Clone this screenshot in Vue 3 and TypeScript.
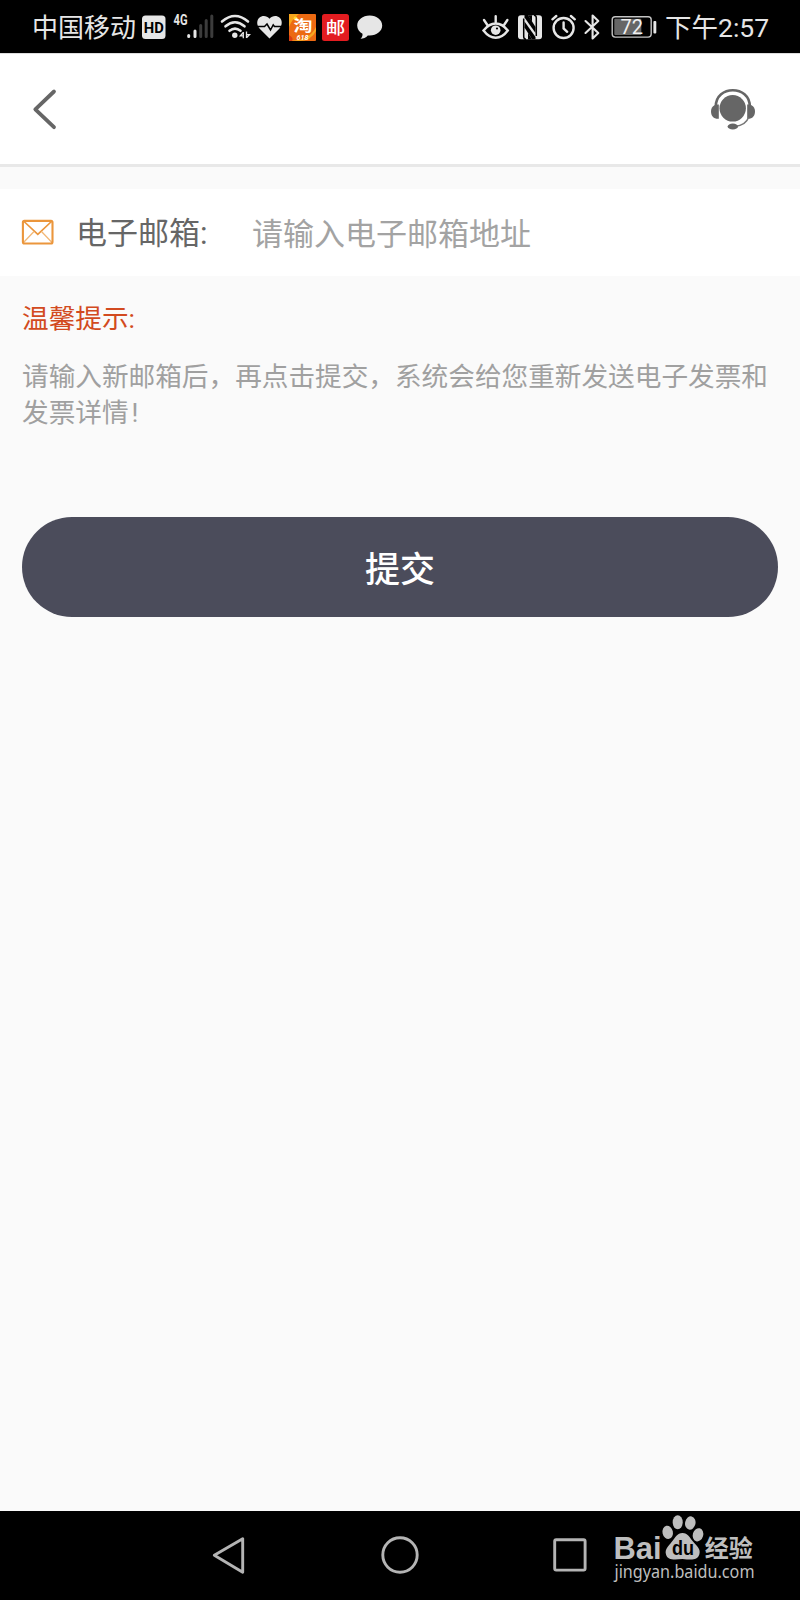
<script setup lang="ts">
import { ref } from 'vue'

const email = ref<string>('')
const carrier = '中国移动'
const time = '下午2:57'
const battery = 72
</script>

<template>
  <div class="phone">
    <div class="status">
      <div class="status-left">
        <span class="carrier">{{ carrier }}</span>
        <svg class="hd" width="24" height="24" viewBox="142 15 24 24">
          <rect x="142" y="15.5" width="23.5" height="23.5" rx="3.5" fill="#e6e6e6" />
          <text x="153.8" y="32.5" text-anchor="middle" textLength="20" lengthAdjust="spacingAndGlyphs" class="hd-text">HD</text>
        </svg>
        <svg class="signal" width="42" height="36" viewBox="173 9 42 36">
          <text x="173.6" y="25.2" textLength="14" lengthAdjust="spacingAndGlyphs" class="net-text">4G</text>
          <g stroke-width="3" stroke-linecap="round">
            <path d="M188.700 35.500V36.500M195 31V36.500" stroke="#e6e6e6" />
            <path d="M200.700 25.500V36.500M206.200 20.500V36.500M211.800 16V36.500" stroke="#3c3c3c" />
          </g>
        </svg>
        <svg class="wifi" width="32" height="26" viewBox="220 14 32 26">
          <g fill="none" stroke="#e6e6e6" stroke-width="2.6" stroke-linecap="round">
            <path d="M222 21.5Q235 10.5 248 21.5" />
            <path d="M225.500 26.300Q235 18.200 244.500 26.300" />
            <path d="M229.500 30.800Q235 26.400 240.500 30.800" />
          </g>
          <circle cx="234.800" cy="35.300" r="2.700" fill="#e6e6e6" />
          <path d="M243.300 32V38.200M243.300 32.300L240.300 35.800H243.300M246.500 31.500V38M246.500 37.800L249.500 34.600H246.500" fill="none" stroke="#e6e6e6" stroke-width="1.300" />
        </svg>
        <svg class="heart" width="26" height="24" viewBox="257 15 26 24">
          <path d="M269.500 38.500L259.500 28.500C256.500 25 256.500 20.500 259.300 17.800C262.300 15 266.800 15.500 269.500 18.800C272.200 15.500 276.700 15 279.700 17.800C282.500 20.500 282.500 25 279.500 28.500Z" fill="#e6e6e6" />
          <path d="M256 26.500H264.500L267 24L270.500 30L273.200 24.800L274.500 26.500H283" fill="none" stroke="#000" stroke-width="1.500" />
        </svg>
        <svg class="tao" width="27" height="27" viewBox="0 0 27 27">
          <rect width="27" height="27" rx="1" fill="#ec6a12" />
          <path d="M0 0H10Q3 5 0 13Z" fill="#f6a51c" />
          <path d="M1 27Q21 26 27 13V17Q22 27 10 27Z" fill="#f8a820" />
          <path d="M0 21Q5 24 3 27H0Z" fill="#d93e13" />
          <circle cx="6.500" cy="4.500" r="2" fill="#ffd52c" />
          <text x="14" y="16.500" text-anchor="middle" textLength="19" lengthAdjust="spacingAndGlyphs" class="tao-text">淘</text>
          <text x="13.500" y="25.600" text-anchor="middle" textLength="12" lengthAdjust="spacingAndGlyphs" class="tao-num">618</text>
        </svg>
        <svg class="you" width="27" height="27" viewBox="0 0 27 27">
          <rect width="27" height="27" rx="2.500" fill="#e31c20" />
          <text x="13.500" y="19.800" text-anchor="middle" textLength="19.500" lengthAdjust="spacingAndGlyphs" class="you-text">邮</text>
        </svg>
        <svg class="bubble" width="26" height="25" viewBox="357 15 26 25">
          <path d="M369.700 15.500C376.800 15.500 382.200 20 382.200 25.500C382.200 31 376.800 35.500 369.700 35.500L367.800 35.400C366 37.600 363.300 38.600 360.500 38.700C362.100 37.300 362.700 35.800 362.500 33.700C359.200 31.900 357.200 29 357.200 25.500C357.200 20 362.600 15.500 369.700 15.500Z" fill="#e6e6e6" />
        </svg>
      </div>
      <div class="status-right">
        <svg width="28" height="26" viewBox="482 14 28 26">
          <g fill="none" stroke="#e6e6e6" stroke-width="2.400" stroke-linecap="round">
            <path d="M483.500 30.500Q489 23.500 495.700 23.500Q502.400 23.500 507.800 30.500Q502.400 37.700 495.700 37.700Q489 37.700 483.500 30.500Z" />
            <path d="M495.700 16.200V22M484 20L487.200 24.700M507.400 20L504.200 24.700" />
          </g>
          <circle cx="495.700" cy="30.200" r="4.800" fill="#e6e6e6" />
          <circle cx="497" cy="28.500" r="1.100" fill="#000" />
        </svg>
        <svg class="nfc" width="24" height="25" viewBox="518 15 24 25">
          <rect x="518" y="15.200" width="24" height="24" rx="3" fill="#e6e6e6" />
          <path d="M523.700 18.500V36.500C523.700 38 524.500 39.200 526 39.200" fill="none" stroke="#000" stroke-width="1.500" />
          <path d="M536.300 36V18C536.300 16.500 535.500 15.200 534 15.200" fill="none" stroke="#000" stroke-width="1.500" />
          <path d="M524.500 15L528 15L535.500 27V33L524.500 17.500Z" fill="#000" />
          <path d="M535.500 39.300H532L524.500 27.500V21.500L535.500 37Z" fill="#000" />
          <path d="M528 24V39.300H532L528 33Z" fill="#000" />
          <path d="M532 30.500V15.200H528L532 22Z" fill="#000" />
        </svg>
        <svg class="alarm" width="26" height="26" viewBox="551 14 26 26">
          <g fill="none" stroke="#e6e6e6" stroke-width="2.400" stroke-linecap="round">
            <circle cx="563.600" cy="28" r="10" />
            <path d="M563.600 22.500V28.500L567.200 31.800M552.400 19.300L556.300 16M574.800 19.300L570.900 16" />
          </g>
        </svg>
        <svg class="bluetooth" width="17" height="28" viewBox="584 13 17 28">
          <path d="M585.500 21L598.300 33L592.600 38.500V15.500L598.300 21L585.500 33" fill="none" stroke="#e6e6e6" stroke-width="2.100" stroke-linejoin="round" stroke-linecap="round" />
        </svg>
        <svg class="battery" width="46" height="24" viewBox="611 15 46 24">
          <rect x="612.200" y="16.700" width="39" height="20.400" rx="3" fill="none" stroke="#c4c4c4" stroke-width="1.400" />
          <rect x="614.300" y="18.800" width="27" height="16.200" rx="1" fill="#666" />
          <rect x="653.400" y="21" width="2.900" height="12.500" rx="1" fill="#e6e6e6" />
          <text x="631.700" y="33.800" text-anchor="middle" class="battery-text">{{ battery }}</text>
        </svg>
        <span class="time">{{ time }}</span>
      </div>
    </div>

    <header class="header">
      <svg width="24" height="42" viewBox="33 88 24 42">
        <path d="M54 91.500L35.300 109.300L54 127.200" fill="none" stroke="#666" stroke-width="3.800" stroke-linecap="round" stroke-linejoin="round" />
      </svg>
      <svg width="46" height="42" viewBox="710 87.500 46 42">
        <circle cx="732.700" cy="107.800" r="13.200" fill="#666" />
        <path d="M715.800 106C715.800 84.300 749.800 84.300 749.800 106" fill="none" stroke="#666" stroke-width="2.600" />
        <path d="M718.800 104C714 103.500 711 106.500 711 111C711 115.500 714 118.800 718.800 118.300Z" fill="#666" />
        <path d="M747.200 104C752 103.500 755 106.500 755 111C755 115.500 752 118.800 747.200 118.300Z" fill="#666" />
        <path d="M748.500 117Q746 124.500 735 126" fill="none" stroke="#777" stroke-width="1.500" />
        <ellipse cx="732.800" cy="126" rx="5.200" ry="3" fill="#666" />
      </svg>
    </header>

    <label class="field">
      <svg class="mail" width="32" height="26" viewBox="22 219 32 26">
        <g fill="none" stroke="#eb963c">
          <path d="M23.500 221L37.800 234.300L52 221" stroke-width="1.700" />
          <path d="M23.500 242.500L34 231.500M52 242.500L41.500 231.500" stroke="#f2b878" stroke-width="1.300" />
          <rect x="22.900" y="220.900" width="29.600" height="22.600" rx="1.500" stroke-width="2.100" />
        </g>
      </svg>
      <span class="label">电子邮箱:</span>
      <input v-model="email" class="input" type="text" placeholder="请输入电子邮箱地址" />
    </label>

    <section class="tips">
      <h2 class="tips-title">温馨提示:</h2>
      <p class="tips-body">请输入新邮箱后，再点击提交，系统会给您重新发送电子发票和<br />发票详情<span class="bang">!</span></p>
    </section>

    <button class="submit" type="button">提交</button>

    <nav class="nav">
      <svg class="nav-back" width="34" height="40" viewBox="211 1535 34 40">
        <path d="M214.300 1555.300L242.700 1538.800V1572.200Z" fill="none" stroke="#b4b4b4" stroke-width="2.900" stroke-linejoin="round" />
      </svg>
      <svg class="nav-home" width="38" height="38" viewBox="0 0 38 38">
        <circle cx="19" cy="19" r="17.200" fill="none" stroke="#b4b4b4" stroke-width="2.900" />
      </svg>
      <svg class="nav-recent" width="34" height="34" viewBox="0 0 34 34">
        <rect x="1.700" y="1.700" width="30.400" height="30.400" rx="1.500" fill="none" stroke="#b4b4b4" stroke-width="2.900" />
      </svg>
      <svg class="watermark" width="150" height="80" viewBox="610 1510 150 80">
        <g fill="#bebebe">
          <text x="613.500" y="1558.500" textLength="48" lengthAdjust="spacingAndGlyphs" class="wm-bai">Bai</text>
          <ellipse cx="667.700" cy="1532.300" rx="5.200" ry="6.700" transform="rotate(-12 667.700 1532.300)" />
          <ellipse cx="677.700" cy="1522.200" rx="5" ry="7" />
          <ellipse cx="690.300" cy="1523" rx="5.200" ry="6.700" transform="rotate(12 690.300 1523)" />
          <ellipse cx="698" cy="1534.800" rx="5.200" ry="6.700" transform="rotate(16 698 1534.800)" />
          <path d="M682.500 1533C688 1533 689.500 1537.500 693 1541.500C697 1546 701 1549 699.300 1554.500C697.500 1560.500 691.500 1560 682.500 1559C673.500 1560 667.500 1560 666 1554.500C664.500 1549 668.500 1546 672 1541.500C675.500 1537.500 677 1533 682.500 1533Z" />
          <text x="704.700" y="1556.700" textLength="48" lengthAdjust="spacingAndGlyphs" class="wm-cn">经验</text>
          <text x="614.500" y="1577.500" textLength="140" lengthAdjust="spacingAndGlyphs" class="wm-url">jingyan.baidu.com</text>
        </g>
        <text x="683" y="1555" text-anchor="middle" textLength="22" lengthAdjust="spacingAndGlyphs" class="wm-du">du</text>
      </svg>
    </nav>
  </div>
</template>

<style>
body {
  margin: 0;
}
</style>

<style scoped>
.phone {
  display: flex;
  flex-direction: column;
  width: 800px;
  height: 1600px;
  overflow: hidden;
  background: #fafafa;
  font-family: Roboto, 'Noto Sans CJK SC', sans-serif;
}
svg {
  display: block;
  flex: none;
  overflow: visible;
}
.status {
  display: flex;
  justify-content: space-between;
  flex: none;
  height: 53px;
  padding: 0 31px 0 32px;
  box-sizing: border-box;
  background: #000;
  color: #e6e6e6;
}
.status-left,
.status-right {
  display: flex;
  align-items: center;
  height: 54px;
}
.carrier {
  width: 104px;
  padding-top: 2px;
  font-size: 26px;
  line-height: 54px;
  white-space: nowrap;
}
.hd { margin-left: 6px; }
.signal { margin-left: 7px; }
.wifi { margin-left: 5px; }
.heart { margin-left: 5px; }
.tao { margin-left: 6px; }
.you { margin-left: 6px; }
.bubble { margin-left: 8px; }
.nfc { margin-left: 8px; }
.alarm { margin-left: 9px; }
.bluetooth { margin-left: 7px; }
.battery { margin-left: 10px; }
.time {
  margin-left: 8px;
  width: 104px;
  padding-top: 1px;
  font-size: 26.500px;
  line-height: 54px;
  white-space: nowrap;
}
.hd-text {
  font: 700 14.500px Roboto, sans-serif;
  fill: #000;
}
.net-text {
  font: 700 15px Roboto, sans-serif;
  fill: #e6e6e6;
}
.tao-text {
  font: 700 15px 'Noto Sans CJK SC', sans-serif;
  fill: #fff;
}
.tao-num {
  font: italic 700 7.500px Roboto, sans-serif;
  fill: #fff;
}
.you-text {
  font: 500 16.500px 'Noto Sans CJK SC', sans-serif;
  fill: #fff;
}
.battery-text {
  font: 400 20px Roboto, sans-serif;
  fill: #f0f0f0;
}
.header {
  display: flex;
  justify-content: space-between;
  align-items: center;
  flex: none;
  height: 114px;
  padding: 0 44px 0 33px;
  box-sizing: border-box;
  border-top: 1px solid #ddd;
  border-bottom: 3px solid #e8e8e8;
  background: #fff;
}
.field {
  display: flex;
  align-items: center;
  flex: none;
  height: 87px;
  margin-top: 22px;
  padding-left: 22px;
  background: #fff;
}
.mail {
  margin-bottom: 1px;
}
.label {
  width: 152px;
  margin-left: 22px;
  padding-top: 3px;
  font-size: 31px;
  line-height: 44px;
  color: #666;
}
.input {
  width: 480px;
  height: 44px;
  margin: 3px 0 0 24px;
  padding: 0;
  border: 0;
  outline: 0;
  background: transparent;
  font-family: inherit;
  font-size: 31px;
  color: #666;
}
.input::placeholder {
  color: #a3a3a3;
  opacity: 1;
}
.tips {
  padding: 24px 22px 0;
}
.tips-title {
  margin: 0;
  font-size: 26.650px;
  font-weight: 400;
  line-height: 38px;
  color: #d24a20;
}
.tips-body {
  margin: 22px 0 0;
  font-size: 26.650px;
  line-height: 35.500px;
  color: #a0a0a0;
  white-space: nowrap;
}
.bang {
  margin-left: 3px;
}
.submit {
  flex: none;
  height: 100px;
  margin: 86px 22px 0;
  padding: 0 0 2px;
  border: 0;
  border-radius: 50px;
  background: #4b4c5b;
  color: #fff;
  font-family: inherit;
  font-size: 35px;
  font-weight: 500;
}
.nav {
  position: relative;
  display: flex;
  align-items: center;
  flex: none;
  height: 89px;
  margin-top: auto;
  padding: 0 0 1px 211px;
  box-sizing: border-box;
  background: #000;
}
.nav-home {
  margin-left: 136px;
}
.nav-recent {
  margin-left: 134px;
}
.watermark {
  position: absolute;
  top: -1px;
  left: 610px;
}
.wm-bai {
  font: 700 31px 'Liberation Sans', sans-serif;
}
.wm-du {
  font: 700 21px 'Liberation Sans', sans-serif;
  fill: #000;
}
.wm-cn {
  font: 700 24px 'Noto Sans CJK SC', sans-serif;
}
.wm-url {
  font: 400 17.500px 'Noto Sans', sans-serif;
}
</style>
